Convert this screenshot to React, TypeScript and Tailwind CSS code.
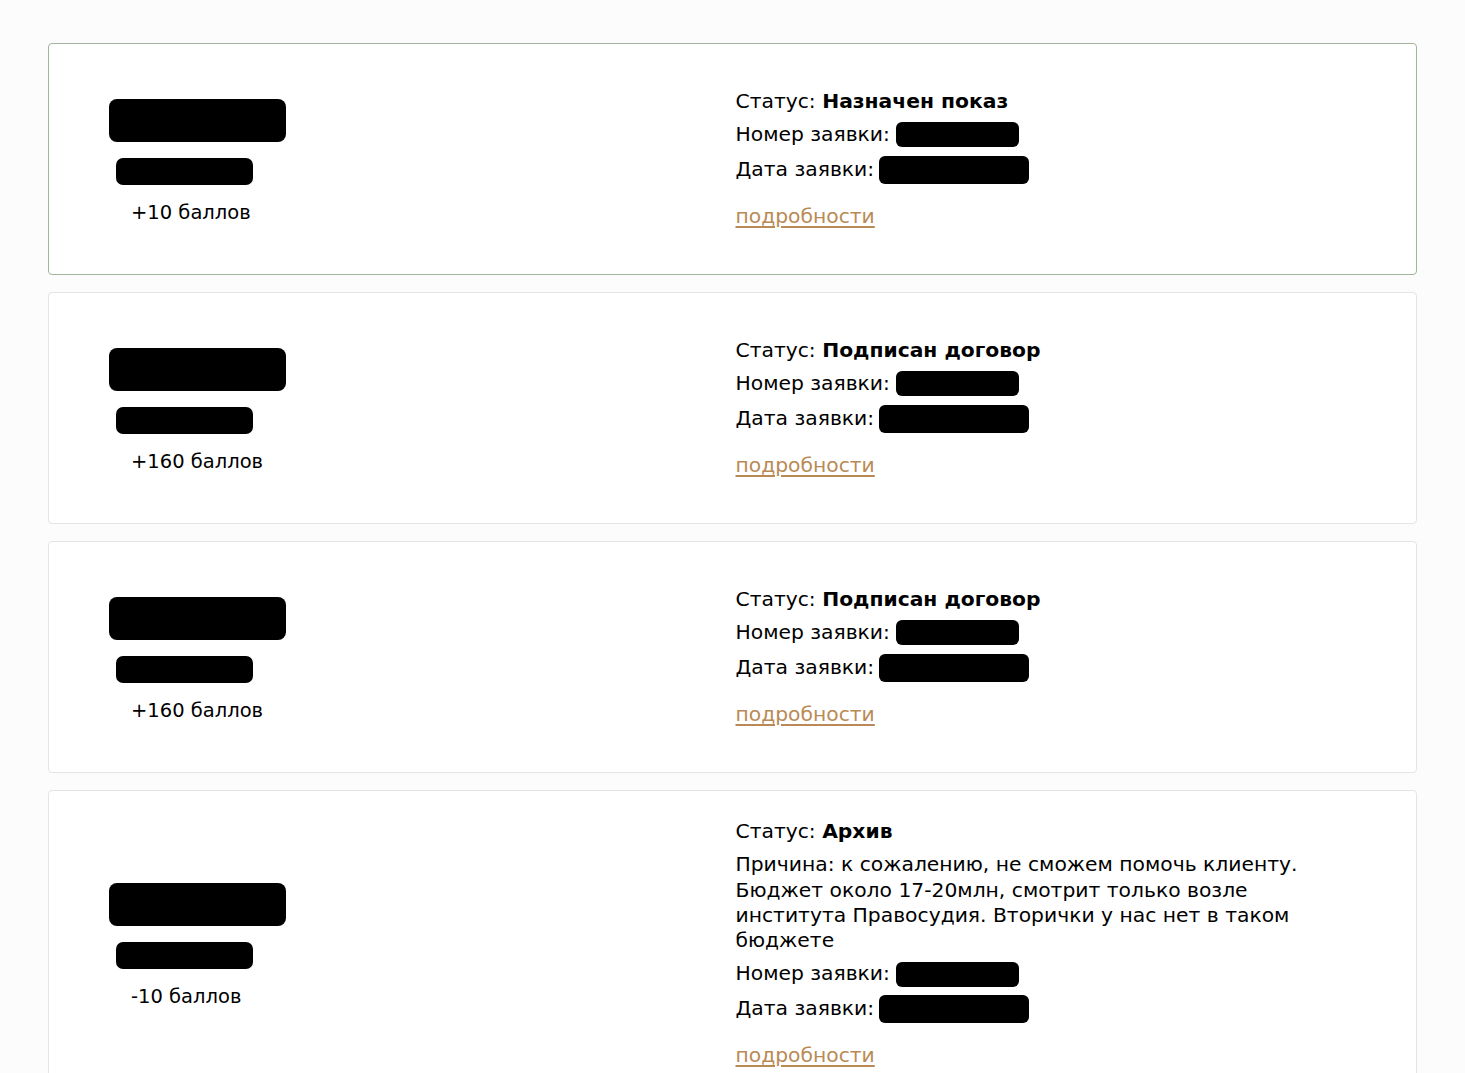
import React from 'react';

type Order = {
  status: string;
  points: string;
  reason?: string;
  active?: boolean;
};

const orders: Order[] = [
  { status: 'Назначен показ', points: '+10 баллов', active: true },
  { status: 'Подписан договор', points: '+160 баллов' },
  { status: 'Подписан договор', points: '+160 баллов' },
  {
    status: 'Архив',
    points: '-10 баллов',
    reason:
      'Причина: к сожалению, не сможем помочь клиенту. Бюджет около 17-20млн, смотрит только возле института Правосудия. Вторички у нас нет в таком бюджете',
  },
];

const Redact = ({ className }: { className: string }) => (
  <div className={`bg-black ${className}`} />
);

const OrderCard = ({ order }: { order: Order }) => (
  <div
    className={`grid grid-cols-2 min-h-[232px] items-center rounded-[4px] bg-white py-[28px] ${
      order.active ? 'border-[1.5px] border-[#a2b49b]' : 'border border-[#e4e4e4]'
    }`}
  >
    <div className="pl-[60px] pt-[6px]">
      <div className="flex w-[177px] flex-col">
        <Redact className="h-[43px] w-[177px] rounded-[8px]" />
        <Redact className="mt-[16px] ml-[7px] h-[27px] w-[137px] rounded-[7px]" />
        <div className="mt-[15px] ml-[22px] text-[19.5px] leading-[26px] text-black">{order.points}</div>
      </div>
    </div>

    <div className="pl-[3px] text-[20.3px] leading-[25.3px] text-black">
      <div>
        Статус: <span className="font-bold">{order.status}</span>
      </div>
      {order.reason && <p className="mt-[8px] max-w-[600px]">{order.reason}</p>}
      <div className="mt-[8px] flex items-center">
        <span>Номер заявки:</span>
        <Redact className="ml-[6px] h-[25px] w-[123px] rounded-[6px]" />
      </div>
      <div className="mt-[8px] flex items-center">
        <span>Дата заявки:</span>
        <Redact className="ml-[5px] h-[28px] w-[150px] rounded-[6px]" />
      </div>
      <a href="#" className="mt-[20px] inline-block text-[#b98a55] underline underline-offset-[3px]">
        подробности
      </a>
    </div>
  </div>
);

export default function App() {
  return (
    <div
      className="min-h-screen bg-[#fcfcfc] px-[48px] pt-[43px] pb-10"
      style={{ fontFamily: '"DejaVu Sans", "Noto Sans", sans-serif' }}
    >
      <div className="flex flex-col gap-[17px]">
        {orders.map((o, i) => (
          <OrderCard key={i} order={o} />
        ))}
      </div>
    </div>
  );
}
